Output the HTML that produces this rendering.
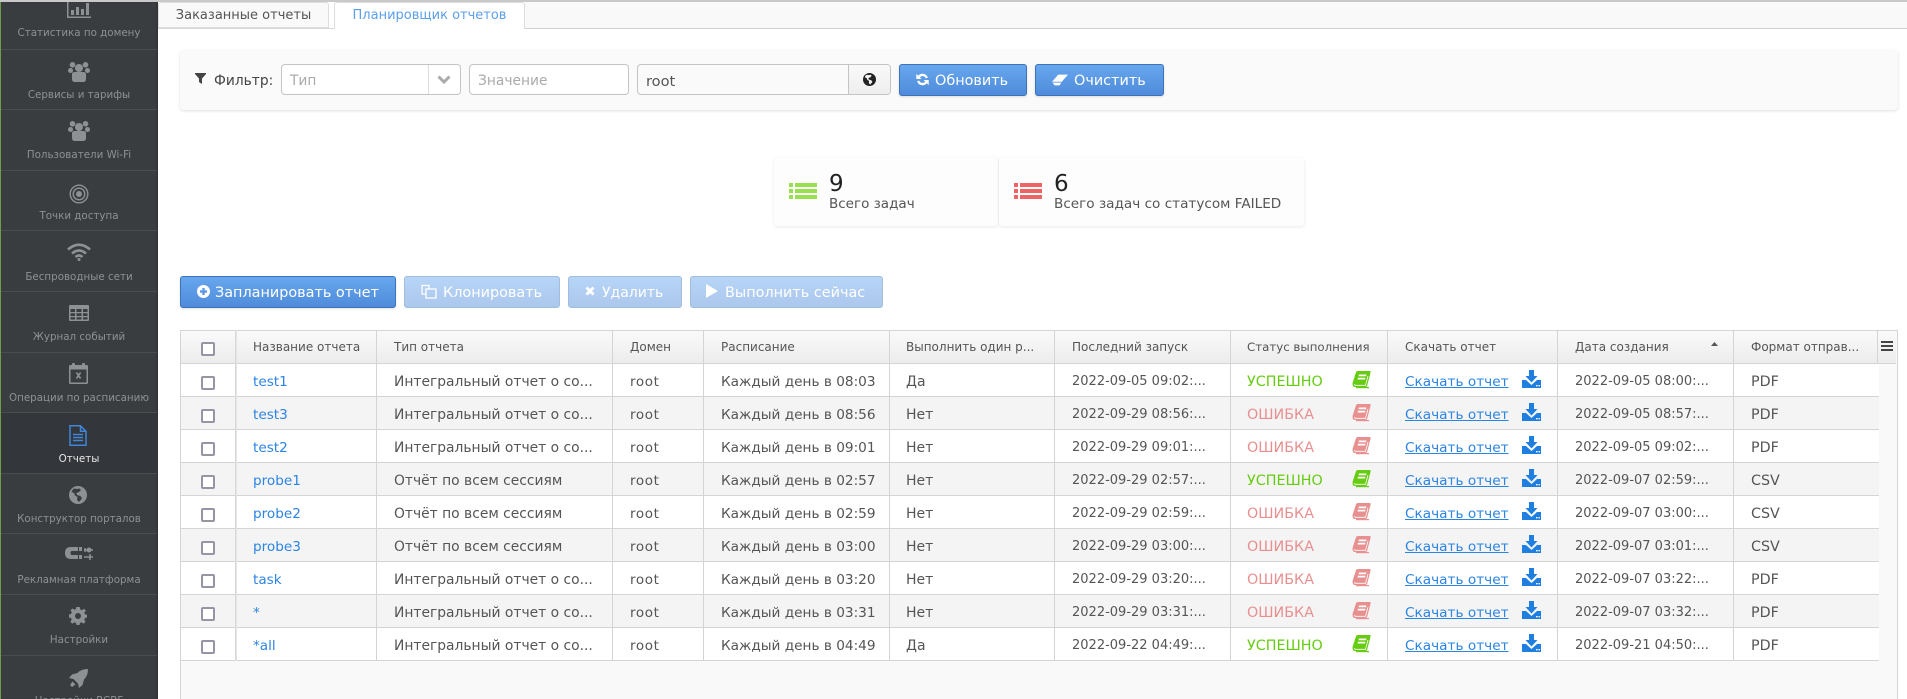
<!DOCTYPE html>
<html lang="ru"><head><meta charset="utf-8"><title>Планировщик отчетов</title>
<style>
*{box-sizing:border-box}
html,body{margin:0;padding:0;width:1907px;height:699px;overflow:hidden;background:#fff}
body{position:relative;font-family:"DejaVu Sans","Liberation Sans",sans-serif;color:#555;font-size:13px}
.abs,.s,.s span,.s svg,.r span,.r a,.r i,.r svg,.h span,.h i,.vl{position:absolute}
#side{position:absolute;left:0;top:2px;width:158px;height:697px;background:#3a3d40;overflow:hidden;border-left:1px solid #6f9c4a;box-shadow:inset -2px 0 2px -1px #2e3033}
.s{left:0;width:156px;border-bottom:1px solid #4a4d50;color:#8e9194;font-size:10.3px;text-align:center}
.s span{left:0;width:156px;white-space:nowrap;line-height:14px}
.s svg{fill:#8e9194}
.tab{position:absolute;top:2px;height:26px;line-height:26px;text-align:center;border:1px solid #ddd;border-radius:3px 3px 0 0;font-size:13px}
.card{position:absolute;top:157px;height:69px;background:#fdfdfd;border-radius:3px;box-shadow:0 1px 3px rgba(0,0,0,.09)}
.inp{position:absolute;top:64px;height:31px;border:1px solid #c4c4c4;border-radius:4px;background:#fff;line-height:33px;padding-left:8px;color:#aaa;font-size:13.8px}
.btn{position:absolute;height:32px;line-height:32px;color:#fff;font-size:14.4px;border:1px solid #3f73b8;border-radius:3px;background:linear-gradient(#67a7ee,#4f8bda);box-shadow:0 1px 2px rgba(0,0,0,.12);white-space:nowrap}
.btn svg{position:absolute;fill:#fff}
.btn span{position:absolute;top:0}
.off{opacity:.47;box-shadow:none}
.h{position:absolute;left:181px;top:330px;width:1715px;height:34px}
.h span{top:0;line-height:33px;font-size:12px;color:#555;white-space:nowrap}
.r{position:absolute;left:181px;width:1698px;height:33px;background:#fff;border-bottom:1px solid #d4d4d4}
.r.e{background:#f4f4f4}
.r span,.r a{top:0;line-height:36px;font-size:13px;white-space:nowrap;color:#555}
.r a{color:#2c84e4;font-size:13.6px}
.r span.dl{color:#2c84e4;font-size:13.65px;text-decoration:underline;left:1224px}
.r i,.h i{left:20px;width:14px;height:14px;border:2px solid #9695a5;border-radius:2px;background:#fff}
.r i{top:12px}.h i{top:11px}
.c1{left:72px}.c2{left:213px}.c3{left:449px}.c4{left:540px}.c5{left:725px}.c6{left:891px}.c7{left:1066px}.c9{left:1394px}.c10{left:1570px}
.r .c2{font-size:13.85px}
.r .c3{font-size:13.5px;letter-spacing:.6px}
.r .c4{font-size:13.65px}
.r .c5{font-size:14px}
.r .c7{font-size:14.3px}
.r .c10{font-size:14.3px}
.ok{color:#66cc11!important}.er{color:#e88f8f!important}
.vl{top:330px;width:1px;height:331px;background:#d4d4d4}
.bk{left:1171px;top:7px;width:19px;height:18px}
.dn{left:1341px;top:6px;width:19px;height:18px;fill:#1f7fe0}
.gn{fill:#66cc11}.rd{fill:#e88f8f}
</style></head><body>
<svg width="0" height="0" style="position:absolute"><defs>
<symbol id="book" viewBox="0 0 19 18"><path d="M6 0H17.5Q19 0 18.6 1.5L15.2 14.5Q14.8 16 13.2 16H3Q.8 16 .6 13.5Q.4 12 1 10.5L4 1.3Q4.4 0 6 0Z"/><path d="M2.5 13.2Q2.6 14.3 3.6 14.3H13.5L16 5" fill="none" stroke="#fff" stroke-width=".8"/><path d="M7 3.500H14.500L14 5.300H6.500ZM6 6.700H13.500L13 8.500H5.500Z" fill="#fff"/><path d="M17 16.6H4" stroke="currentColor" stroke-width="1.2"/></symbol>
<symbol id="dl" viewBox="0 0 19 18"><path d="M7 0H12V6H15.5L9.5 12.5 3.500 6H7ZM0 10H4L9.500 15 15 10H19V18H0Z"/><path d="M14 15h1.600v1.400H14ZM16.500 15h1.400v1.400H16.500Z" fill="#fff"/></symbol>
<symbol id="users" viewBox="0 0 22 20"><circle cx="11" cy="6" r="4"/><circle cx="4.500" cy="2.800" r="2.800"/><circle cx="17.500" cy="2.800" r="2.800"/><circle cx="2.500" cy="8.500" r="2.500"/><circle cx="19.500" cy="8.500" r="2.500"/><path d="M4 12Q4 10 7 10H15Q18 10 18 12V17Q18 20 15 20H7Q4 20 4 17Z"/></symbol>
</defs></svg>

<div class="abs" style="left:0;top:0;width:1907px;height:2px;background:#c9c9c9"></div>
<div class="abs" style="left:525px;top:2px;width:1382px;height:27px;background:#f9f9f9;border-bottom:1px solid #d2d2d2"></div>
<div class="abs" style="left:158px;top:28px;width:176px;height:1px;background:#d8d8d8"></div>

<div id="side">
<div class="s" style="top:0;height:48px"><svg style="left:66px;top:0" width="24" height="16" viewBox="0 0 24 16"><path d="M0 0H1.500V14.500H24V16H0ZM4 8H7V13H4ZM9 5H12V13H9ZM14 7H17V13H14ZM19 1H22V13H19Z"/></svg><span style="top:24px">Статистика по домену</span></div>
<div class="s" style="top:48px;height:60px"><svg style="left:67px;top:12px" width="22" height="20"><use href="#users"/></svg><span style="top:38px">Сервисы и тарифы</span></div>
<div class="s" style="top:108px;height:61px"><svg style="left:67px;top:11px" width="22" height="20"><use href="#users"/></svg><span style="top:38px">Пользователи Wi-Fi</span></div>
<div class="s" style="top:169px;height:60px"><svg style="left:68px;top:13px;fill:none;stroke:#8e9194" width="20" height="20" viewBox="0 0 20 20"><circle cx="10" cy="10" r="8.800" stroke-width="1.400"/><circle cx="10" cy="10" r="5.800" stroke-width="1.400"/><circle cx="10" cy="10" r="3" fill="#8e9194" stroke="none"/></svg><span style="top:38px">Точки доступа</span></div>
<div class="s" style="top:229px;height:61px"><svg style="left:66px;top:12px;fill:none;stroke:#8e9194;stroke-width:2.600" width="24" height="18" viewBox="0 0 24 18"><path d="M1 6.500Q12-3 23 6.500M5 10.500Q12 4.500 19 10.500M8.500 14Q12 11 15.500 14"/><circle cx="12" cy="16.500" r="1.500" fill="#8e9194" stroke="none"/></svg><span style="top:39px">Беспроводные сети</span></div>
<div class="s" style="top:290px;height:61px"><svg style="left:68px;top:13px" width="20" height="16" viewBox="0 0 20 16"><path fill-rule="evenodd" d="M1 0H19Q20 0 20 1V15Q20 16 19 16H1Q0 16 0 15V1Q0 0 1 0ZM1.500 4V7H6V4ZM7.500 4V7H12.500V4ZM14 4V7H18.500V4ZM1.500 8.300V11H6V8.300ZM7.500 8.300V11H12.500V8.300ZM14 8.300V11H18.500V8.300ZM1.500 12.300V14.500H6V12.300ZM7.500 12.300V14.500H12.500V12.300ZM14 12.300V14.500H18.500V12.300Z"/></svg><span style="top:38px">Журнал событий</span></div>
<div class="s" style="top:351px;height:60px"><svg style="left:68px;top:10px" width="19" height="21" viewBox="0 0 19 21"><path fill-rule="evenodd" d="M1.500 2H3V1Q3 0 4 0H5Q6 0 6 1V2H13V1Q13 0 14 0H15Q16 0 16 1V2H17.500Q19 2 19 3.500V19.500Q19 21 17.500 21H1.500Q0 21 0 19.500V3.500Q0 2 1.500 2ZM1.500 6.500V19.500H17.500V6.500ZM6.800 10L8 9 9.500 11 11 9 12.200 10 10.500 12.500 12.200 15 11 16 9.500 14 8 16 6.800 15 8.500 12.500Z"/></svg><span style="top:38px">Операции по расписанию</span></div>
<div class="s" style="top:411px;height:61px;background:#33363a;color:#e8e8e8"><svg style="left:68px;top:12px;fill:none;stroke:#3f86d8;stroke-width:1.500" width="18" height="21" viewBox="0 0 18 21"><path d="M1 .8H11.500L17 6.300V20.200H1ZM11.500 .8V6.300H17"/><path d="M4 9.500H14M4 12.500H14M4 15.500H14"/></svg><span style="top:39px">Отчеты</span></div>
<div class="s" style="top:472px;height:60px"><svg style="left:68px;top:12px" width="18" height="18" viewBox="0 0 18 18"><path fill-rule="evenodd" d="M9 0A9 9 0 1 1 9 18 9 9 0 0 1 9 0ZM5 2.500Q3 4 2.500 6L5 7 6 9.500 8.500 11 8 14 10 16 13 12.500 11.500 10 8 9 7.500 7 10 6 12 4 10.500 2.500 8 3Z"/></svg><span style="top:38px">Конструктор порталов</span></div>
<div class="s" style="top:532px;height:61px"><svg style="left:64px;top:11px" width="28" height="16" viewBox="0 0 28 16"><path d="M6 2H13V6H7Q5.500 6 5.500 8T7 10H13V14H6Q0 14 0 8T6 2ZM14 2H17V6H14ZM14 10H17V14H14Z"/><path d="M19 5H28M19 12H28M20 3V7M25 9V15" stroke="#8e9194" stroke-width="1.500"/><circle cx="24" cy="5" r="2.500"/></svg><span style="top:39px">Рекламная платформа</span></div>
<div class="s" style="top:593px;height:61px"><svg style="left:68px;top:12px" width="18" height="18" viewBox="0 0 18 18"><path fill-rule="evenodd" d="M7.300 0H10.700L11.200 2.400 13 3.200 15.200 1.800 16.800 3.800 15.300 5.800 16 7.400 18 7.800V10.500L16 11 15.300 12.700 16.500 14.700 14.500 16.700 12.700 15.300 11 16 10.500 18H7.500L7 16 5.300 15.300 3.300 16.700 1.300 14.700 2.700 12.700 2 11 0 10.500V7.500L2 7 2.800 5.200 1.500 3.300 3.500 1.500 5.400 2.800 7 2ZM9 6A3 3 0 1 0 9 12 3 3 0 0 0 9 6Z"/></svg><span style="top:38px">Настройки</span></div>
<div class="s" style="top:654px;height:60px;border:0"><svg style="left:68px;top:13px" width="19" height="19" viewBox="0 0 19 19"><path d="M19 0Q19 7 15 10.500L13.500 16 10 19 9 14.500 4.500 10 0 9 3 5.500 8.500 4Q12 0 19 0ZM3.500 12.500L6.500 15.500 3 18 1 16Z"/></svg><span style="top:38px">Настройки BCBF</span></div>
</div>

<div class="tab" style="left:158px;width:171px;background:#f9f9f9;color:#555">Заказанные отчеты</div>
<div class="tab" style="left:334px;width:191px;height:27px;background:#fff;color:#5b9fea;border-bottom:0">Планировщик отчетов</div>

<div class="abs" style="left:180px;top:50px;width:1718px;height:60px;background:#fafafa;border-radius:4px;box-shadow:0 1px 3px rgba(0,0,0,.13)"></div>
<svg class="abs" style="left:195px;top:73px;fill:#444" width="11" height="11" viewBox="0 0 11 11"><path d="M0 0H11V1L7 5.500V11L4 9V5.500L0 1Z"/></svg>
<div class="abs" style="left:214px;top:64px;line-height:35px;color:#444;font-size:13.8px">Фильтр:</div>
<div class="inp" style="left:281px;width:180px">Тип<div class="abs" style="left:146px;top:0;width:1px;height:29px;background:#ddd"></div><svg class="abs" style="left:155px;top:10px" width="14" height="10" viewBox="0 0 14 10"><path d="M1.500 1.500L7 7 12.500 1.500" fill="none" stroke="#aaa" stroke-width="3"/></svg></div>
<div class="inp" style="left:469px;width:160px">Значение</div>
<div class="inp" style="left:637px;width:254px;background:#fafafa;color:#555;font-size:14.6px">root<div class="abs" style="left:210px;top:0;width:42px;height:29px;border-left:1px solid #c4c4c4;background:linear-gradient(#f9f9f9,#eee);border-radius:0 3px 3px 0"><svg class="abs" style="left:14px;top:8px" width="13" height="13" viewBox="0 0 18 18"><path fill="#222" fill-rule="evenodd" d="M9 0A9 9 0 1 1 9 18 9 9 0 0 1 9 0ZM5 2.500Q3 4 2.500 6L5 7 6 9.500 8.500 11 8 14 10 16 13 12.500 11.500 10 8 9 7.500 7 10 6 12 4 10.500 2.500 8 3Z"/></svg></div></div>

<div class="btn" style="left:899px;top:64px;width:128px"><svg style="left:15px;top:7px" width="15" height="15" viewBox="0 0 14 14"><path d="M12 5.500A5.200 5.200 0 0 0 3 3.500L1.200 1.800V6.500H6L4.500 5A3.200 3.200 0 0 1 10 6ZM2 8.500A5.200 5.200 0 0 0 11 10.500L12.800 12.200V7.500H8L9.500 9A3.200 3.200 0 0 1 4 8Z"/></svg><span style="left:35px">Обновить</span></div>
<div class="btn" style="left:1035px;top:64px;width:129px"><svg style="left:16px;top:9px" width="16" height="12" viewBox="0 0 18 12"><path d="M7 0H18L11 8H0Z M.5 9H10.500L8.500 12H3Z" /></svg><span style="left:38px">Очистить</span></div>

<div class="card" style="left:774px;width:224px"><svg class="abs" style="left:15px;top:26px" width="28" height="16" viewBox="0 0 28 16"><path fill="#99e050" d="M0 0H4V4H0ZM6 0H28V4H6ZM0 6H4V10H0ZM6 6H28V10H6ZM0 12H4V16H0ZM6 12H28V16H6Z"/></svg><div class="abs" style="left:55px;top:14px;font-size:23px;line-height:26px;color:#222">9</div><div class="abs" style="left:55px;top:38px;font-size:13.5px;line-height:18px;white-space:nowrap">Всего задач</div></div>
<div class="card" style="left:999px;width:305px"><svg class="abs" style="left:15px;top:26px" width="28" height="16" viewBox="0 0 28 16"><path fill="#ee6464" d="M0 0H4V4H0ZM6 0H28V4H6ZM0 6H4V10H0ZM6 6H28V10H6ZM0 12H4V16H0ZM6 12H28V16H6Z"/></svg><div class="abs" style="left:55px;top:14px;font-size:23px;line-height:26px;color:#222">6</div><div class="abs" style="left:55px;top:38px;font-size:13.6px;line-height:18px;white-space:nowrap">Всего задач со статусом FAILED</div></div>

<div class="btn" style="left:180px;top:276px;width:216px"><svg style="left:16px;top:8px" width="13" height="13" viewBox="0 0 13 13"><path fill-rule="evenodd" d="M6.500 0A6.500 6.500 0 1 1 6.500 13 6.500 6.500 0 0 1 6.500 0ZM5.300 3V5.300H3V7.700H5.300V10H7.700V7.700H10V5.300H7.700V3Z"/></svg><span style="left:34px">Запланировать отчет</span></div>
<div class="btn off" style="left:404px;top:276px;width:156px"><svg style="left:16px;top:7px;fill:none;stroke:#fff;stroke-width:1.300" width="16" height="15" viewBox="0 0 16 15"><path d="M1 1.500H8V5H5V10H1ZM5 5H15V14H5Z"/></svg><span style="left:38px">Клонировать</span></div>
<div class="btn off" style="left:568px;top:276px;width:114px"><svg style="left:16px;top:9px" width="10" height="10" viewBox="0 0 10 10"><path d="M2.500 .5L5 3 7.500 .5 9.500 2.500 7 5 9.500 7.500 7.500 9.500 5 7 2.500 9.500 .5 7.500 3 5 .5 2.500Z"/></svg><span style="left:33px;font-size:14px">Удалить</span></div>
<div class="btn off" style="left:690px;top:276px;width:193px"><svg style="left:15px;top:7px" width="12" height="14" viewBox="0 0 12 14"><path d="M0 0L12 7 0 14Z"/></svg><span style="left:34px">Выполнить сейчас</span></div>

<div class="abs" style="left:180px;top:330px;width:1718px;height:369px;background:#f9f9f9;border:1px solid #d4d4d4;border-bottom:0"></div>

<div class="h" style="background:linear-gradient(#fafafa,#ececec);border-bottom:1px solid #d4d4d4;border-top:1px solid #d4d4d4"><i></i><span class="c1">Название отчета</span><span class="c2">Тип отчета</span><span class="c3">Домен</span><span class="c4">Расписание</span><span class="c5">Выполнить один р...</span><span class="c6">Последний запуск</span><span class="c7" style="font-size:11.8px">Статус выполнения</span><span style="left:1224px">Скачать отчет</span><span class="c9">Дата создания</span><span class="c10">Формат отправ...</span><svg class="abs" style="left:1530px;top:11px;fill:#555" width="7" height="4" viewBox="0 0 7 4"><path d="M3.500 0L7 4H0Z"/></svg><svg class="abs" style="left:1700px;top:10px" width="12" height="10" viewBox="0 0 12 10"><path fill="#444" d="M0 0H12V2H0ZM0 4H12V6H0ZM0 8H12V10H0Z"/></svg></div>

<div class="r" style="top:364px"><i></i><a class="c1">test1</a><span class="c2">Интегральный отчет о со...</span><span class="c3">root</span><span class="c4">Каждый день в 08:03</span><span class="c5">Да</span><span class="c6">2022-09-05 09:02:...</span><span class="c7 ok">УСПЕШНО</span><svg class="bk gn" style="color:#66cc11"><use href="#book"/></svg><span class="dl">Скачать отчет</span><svg class="dn"><use href="#dl"/></svg><span class="c9">2022-09-05 08:00:...</span><span class="c10">PDF</span></div>
<div class="r e" style="top:397px"><i></i><a class="c1">test3</a><span class="c2">Интегральный отчет о со...</span><span class="c3">root</span><span class="c4">Каждый день в 08:56</span><span class="c5">Нет</span><span class="c6">2022-09-29 08:56:...</span><span class="c7 er">ОШИБКА</span><svg class="bk rd" style="color:#e88f8f"><use href="#book"/></svg><span class="dl">Скачать отчет</span><svg class="dn"><use href="#dl"/></svg><span class="c9">2022-09-05 08:57:...</span><span class="c10">PDF</span></div>
<div class="r" style="top:430px"><i></i><a class="c1">test2</a><span class="c2">Интегральный отчет о со...</span><span class="c3">root</span><span class="c4">Каждый день в 09:01</span><span class="c5">Нет</span><span class="c6">2022-09-29 09:01:...</span><span class="c7 er">ОШИБКА</span><svg class="bk rd" style="color:#e88f8f"><use href="#book"/></svg><span class="dl">Скачать отчет</span><svg class="dn"><use href="#dl"/></svg><span class="c9">2022-09-05 09:02:...</span><span class="c10">PDF</span></div>
<div class="r e" style="top:463px"><i></i><a class="c1">probe1</a><span class="c2">Отчёт по всем сессиям</span><span class="c3">root</span><span class="c4">Каждый день в 02:57</span><span class="c5">Нет</span><span class="c6">2022-09-29 02:57:...</span><span class="c7 ok">УСПЕШНО</span><svg class="bk gn" style="color:#66cc11"><use href="#book"/></svg><span class="dl">Скачать отчет</span><svg class="dn"><use href="#dl"/></svg><span class="c9">2022-09-07 02:59:...</span><span class="c10">CSV</span></div>
<div class="r" style="top:496px"><i></i><a class="c1">probe2</a><span class="c2">Отчёт по всем сессиям</span><span class="c3">root</span><span class="c4">Каждый день в 02:59</span><span class="c5">Нет</span><span class="c6">2022-09-29 02:59:...</span><span class="c7 er">ОШИБКА</span><svg class="bk rd" style="color:#e88f8f"><use href="#book"/></svg><span class="dl">Скачать отчет</span><svg class="dn"><use href="#dl"/></svg><span class="c9">2022-09-07 03:00:...</span><span class="c10">CSV</span></div>
<div class="r e" style="top:529px"><i></i><a class="c1">probe3</a><span class="c2">Отчёт по всем сессиям</span><span class="c3">root</span><span class="c4">Каждый день в 03:00</span><span class="c5">Нет</span><span class="c6">2022-09-29 03:00:...</span><span class="c7 er">ОШИБКА</span><svg class="bk rd" style="color:#e88f8f"><use href="#book"/></svg><span class="dl">Скачать отчет</span><svg class="dn"><use href="#dl"/></svg><span class="c9">2022-09-07 03:01:...</span><span class="c10">CSV</span></div>
<div class="r" style="top:562px"><i></i><a class="c1">task</a><span class="c2">Интегральный отчет о со...</span><span class="c3">root</span><span class="c4">Каждый день в 03:20</span><span class="c5">Нет</span><span class="c6">2022-09-29 03:20:...</span><span class="c7 er">ОШИБКА</span><svg class="bk rd" style="color:#e88f8f"><use href="#book"/></svg><span class="dl">Скачать отчет</span><svg class="dn"><use href="#dl"/></svg><span class="c9">2022-09-07 03:22:...</span><span class="c10">PDF</span></div>
<div class="r e" style="top:595px"><i></i><a class="c1">*</a><span class="c2">Интегральный отчет о со...</span><span class="c3">root</span><span class="c4">Каждый день в 03:31</span><span class="c5">Нет</span><span class="c6">2022-09-29 03:31:...</span><span class="c7 er">ОШИБКА</span><svg class="bk rd" style="color:#e88f8f"><use href="#book"/></svg><span class="dl">Скачать отчет</span><svg class="dn"><use href="#dl"/></svg><span class="c9">2022-09-07 03:32:...</span><span class="c10">PDF</span></div>
<div class="r" style="top:628px"><i></i><a class="c1">*all</a><span class="c2">Интегральный отчет о со...</span><span class="c3">root</span><span class="c4">Каждый день в 04:49</span><span class="c5">Да</span><span class="c6">2022-09-22 04:49:...</span><span class="c7 ok">УСПЕШНО</span><svg class="bk gn" style="color:#66cc11"><use href="#book"/></svg><span class="dl">Скачать отчет</span><svg class="dn"><use href="#dl"/></svg><span class="c9">2022-09-21 04:50:...</span><span class="c10">PDF</span></div>

<div class="vl" style="left:235px;width:2px;background:linear-gradient(90deg,#d4d4d4,#e9e9e9)"></div>
<div class="vl" style="left:376px"></div><div class="vl" style="left:612px"></div><div class="vl" style="left:703px"></div><div class="vl" style="left:889px"></div><div class="vl" style="left:1054px"></div><div class="vl" style="left:1230px"></div><div class="vl" style="left:1387px"></div><div class="vl" style="left:1557px"></div><div class="vl" style="left:1733px"></div>
<div class="vl" style="left:1877px;height:34px"></div>
</body></html>
